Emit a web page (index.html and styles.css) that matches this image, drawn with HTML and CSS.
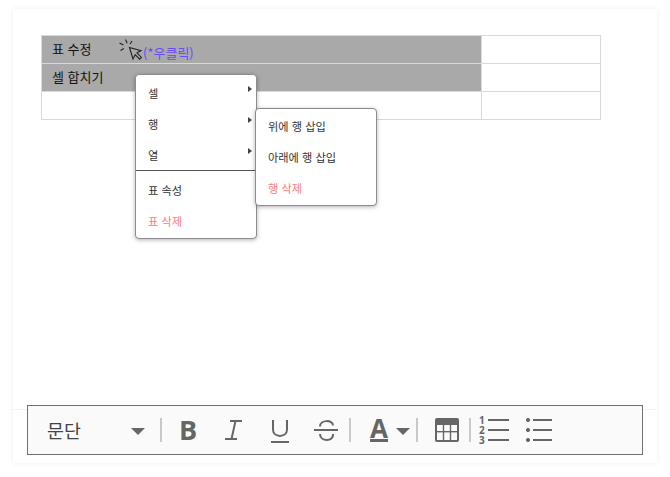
FILE: index.html
```html
<!DOCTYPE html>
<html lang="ko">
<head>
<meta charset="utf-8">
<title>표 수정</title>
<link rel="stylesheet" href="styles.css">
</head>
<body>
<div class="card">
  <div class="editor">
    <table class="grid">
      <tr class="on"><td class="wide"><span class="cell-label">표 수정</span></td><td></td></tr>
      <tr class="on"><td class="wide"><span class="cell-label">셀 합치기</span></td><td></td></tr>
      <tr><td class="wide"></td><td></td></tr>
    </table>
    <div class="hint">
      <svg class="cursor" width="24" height="22" viewBox="0 0 24 22" fill="none" stroke="#222" stroke-width="1.1">
        <path d="M10.5 8.5 L14 20 L16.2 15.6 L20.6 20.2 L22.4 18.4 L18 13.8 L22 11.6 Z" fill="#aaa"/>
        <path d="M6.5 0.5 L8.2 4.2 M0.5 4 L4.4 6 M13 2 L11 5 M1.5 11.5 L4.8 9.6"/>
      </svg>
      <span class="hint-text">(*우클릭)</span>
    </div>
    <div class="menu main-menu">
      <div class="item arrow">셀</div>
      <div class="item arrow">행</div>
      <div class="item arrow">열</div>
      <div class="rule"></div>
      <div class="item">표 속성</div>
      <div class="item danger">표 삭제</div>
    </div>
    <div class="menu sub-menu">
      <div class="item">위에 행 삽입</div>
      <div class="item">아래에 행 삽입</div>
      <div class="item danger">행 삭제</div>
    </div>
  </div>
  <div class="toolbar">
    <span class="format">문단</span>
    <span class="caret"></span>
    <span class="sep sep-a"></span>
    <span class="tool t-b">B</span>
    <svg class="t-i" width="17" height="20" viewBox="0 0 17 20" fill="none" stroke="#666" stroke-width="2">
      <path d="M5 1 H17 M0 19 H12 M10.5 1 L6.5 19"/>
    </svg>
    <svg class="t-u" width="18" height="24" viewBox="0 0 18 24" fill="none" stroke="#666" stroke-width="2">
      <path d="M2 1 V10.5 C2 19 16 19 16 10.5 V1"/>
      <path d="M0 23 H18"/>
    </svg>
    <svg class="t-s" width="24" height="22" viewBox="0 0 24 22" fill="none" stroke="#666" stroke-width="2">
      <path d="M6 6.5 C6 -0.5 19 -0.5 19 5.5 M0 10 H24 M6 14 C6 22 20 22 19 14"/>
    </svg>
    <span class="sep sep-b"></span>
    <span class="tool t-a">A</span>
    <span class="caret caret-a"></span>
    <span class="sep sep-c"></span>
    <svg class="t-table" width="24" height="24" viewBox="0 0 24 24">
      <rect x="0" y="0" width="24" height="24" rx="2" fill="#666"/>
      <g fill="#fafafa">
        <rect x="2" y="7" width="5.8" height="6"/><rect x="9.2" y="7" width="5.6" height="6"/><rect x="16.2" y="7" width="5.8" height="6"/>
        <rect x="2" y="14.4" width="5.8" height="7.6"/><rect x="9.2" y="14.4" width="5.6" height="7.6"/><rect x="16.2" y="14.4" width="5.8" height="7.6"/>
      </g>
    </svg>
    <span class="sep sep-d"></span>
    <div class="ol">
      <span class="nums"><span>1</span><span>2</span><span>3</span></span>
      <svg width="21" height="24" viewBox="0 0 21 24" stroke="#666" stroke-width="2"><path d="M0 2 H21 M0 12 H21 M0 22 H21"/></svg>
    </div>
    <svg class="t-ul" width="28" height="24" viewBox="0 0 28 24" fill="#666" stroke="#666">
      <circle cx="3" cy="2" r="1.6"/><circle cx="3" cy="12" r="1.6"/><circle cx="3" cy="22" r="1.6"/>
      <path stroke-width="2" d="M8 2 H27 M8 12 H27 M8 22 H27"/>
    </svg>
  </div>
</div>
</body>
</html>
```
FILE: styles.css
```css
* { box-sizing: border-box; }
html, body { margin: 0; padding: 0; background: #fff; }
body {
  width: 670px;
  height: 477px;
  overflow: hidden;
  padding: 9px 13px 14px;
  font-family: "Noto Sans CJK KR", "Noto Sans", sans-serif;
  color: #222;
}
.card {
  position: relative;
  height: 454px;
  background: #fff;
  box-shadow: 0 0 6px rgba(0, 0, 0, 0.07);
  display: flex;
  flex-direction: column;
}
.editor {
  position: relative;
  flex: 1;
  padding: 26px 0 0 28px;
  border-bottom: 1px solid #f2f2f2;
  margin-bottom: 53px;
}
.grid {
  border-collapse: collapse;
  width: 560px;
  table-layout: fixed;
}
.grid td {
  height: 28px;
  border: 1px solid #d9d9d9;
  padding: 0 0 0 10px;
  font-size: 13px;
  line-height: 18px;
}
.grid .wide { width: 440px; }
.grid .on .wide { background: #a9a9a9; color: #111; }
.cell-label { position: relative; top: -1px; }
.hint {
  position: absolute;
  left: 106px;
  top: 30px;
  display: flex;
  align-items: flex-end;
}
.hint-text {
  font-size: 13px;
  line-height: 17px;
  color: #6a4cf5;
}
.menu {
  position: absolute;
  background: #fff;
  border: 1px solid #8c8c8c;
  border-radius: 4px;
  box-shadow: 0 1px 4px rgba(0, 0, 0, 0.3);
  padding: 4px 0 0;
  font-size: 11.2px;
}
.main-menu { left: 122px; top: 65px; width: 122px; height: 165px; z-index: 1; }
.sub-menu { left: 242px; top: 99px; width: 122px; height: 98px; padding-top: 3px; z-index: 2; }
.item {
  position: relative;
  height: 31px;
  line-height: 29px;
  padding-left: 12px;
  color: #333;
}
.arrow::after {
  content: "";
  position: absolute;
  right: 4px;
  top: 7px;
  border-left: 4px solid #444;
  border-top: 3px solid transparent;
  border-bottom: 3px solid transparent;
}
.rule { height: 0; margin: -2px 0 5px; border-top: 1px solid #555; }
.danger { color: #ff7b7b; }
.toolbar {
  position: absolute;
  left: 14px;
  top: 396px;
  width: 616px;
  height: 50px;
  background: #fafafa;
  border: 1px solid #6f6f6f;
  display: flex;
  align-items: center;
  padding-left: 19px;
  color: #666;
}
.format { font-size: 18.4px; line-height: 24px; color: #444; width: 84px; }
.caret {
  width: 0;
  height: 0;
  border-left: 7px solid transparent;
  border-right: 7px solid transparent;
  border-top: 7px solid #666;
  margin-top: 3px;
}
.sep { width: 2px; height: 24px; background: #c8c8c8; }
.sep-a { margin-left: 15px; }
.tool { display: block; }
.t-b { font: 700 27px/24px "Open Sans", sans-serif; margin-left: 17px; width: 18px; }
.t-i { margin-left: 28px; }
.t-u { margin-left: 29px; margin-top: 2px; }
.t-s { margin-left: 25px; margin-top: 1px; }
.sep-b { margin-left: 11px; }
.t-a { font: 700 26px/21px "Open Sans", sans-serif; margin-left: 19px; width: 18px; height: 24px; border-bottom: 3px solid #666; text-align: center; }
.caret-a { margin-left: 8px; }
.sep-c { margin-left: 6px; }
.t-table { margin-left: 17px; }
.sep-d { margin-left: 10px; }
.ol { display: flex; align-items: center; margin-left: 8px; gap: 2px; }
.nums {
  display: flex;
  flex-direction: column;
  font: 700 10px/10px "Open Sans", sans-serif;
  width: 7px;
}
.t-ul { margin-left: 16px; }
```
